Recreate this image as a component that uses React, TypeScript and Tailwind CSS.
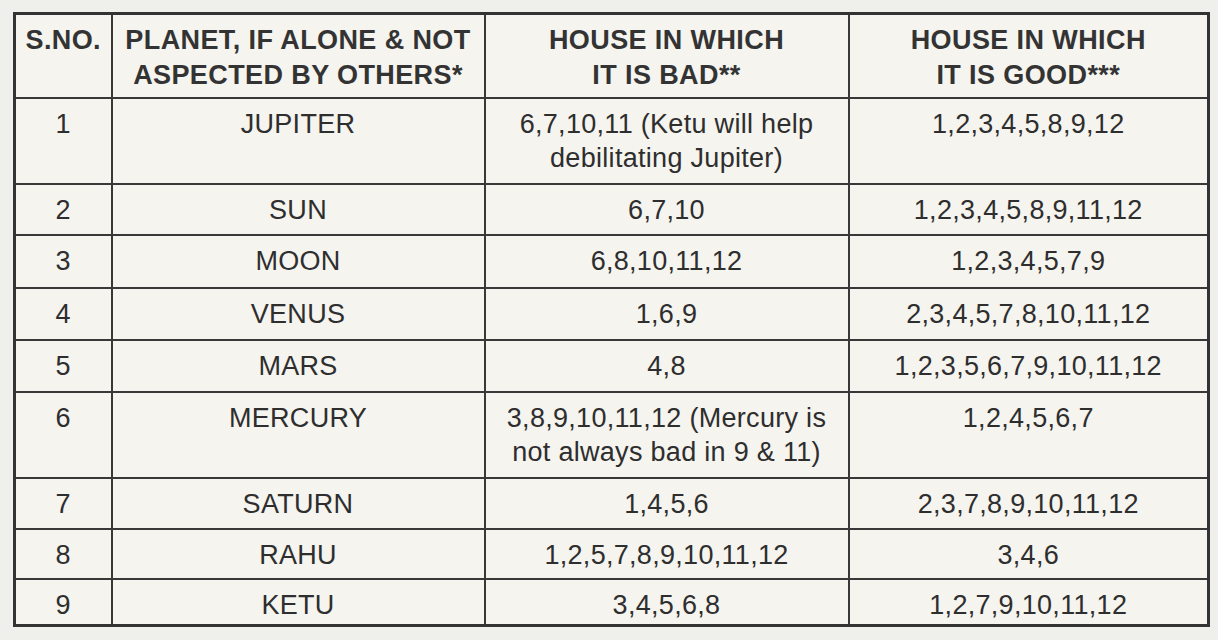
import React from 'react';

type Row = { no: string; planet: string; bad: string[]; good: string; h: string };

const rows: Row[] = [
  { no: '1', planet: 'JUPITER', bad: ['6,7,10,11 (Ketu will help', 'debilitating Jupiter)'], good: '1,2,3,4,5,8,9,12', h: 'h-[86px]' },
  { no: '2', planet: 'SUN', bad: ['6,7,10'], good: '1,2,3,4,5,8,9,11,12', h: 'h-[51px]' },
  { no: '3', planet: 'MOON', bad: ['6,8,10,11,12'], good: '1,2,3,4,5,7,9', h: 'h-[53px]' },
  { no: '4', planet: 'VENUS', bad: ['1,6,9'], good: '2,3,4,5,7,8,10,11,12', h: 'h-[52px]' },
  { no: '5', planet: 'MARS', bad: ['4,8'], good: '1,2,3,5,6,7,9,10,11,12', h: 'h-[52px]' },
  { no: '6', planet: 'MERCURY', bad: ['3,8,9,10,11,12 (Mercury is', 'not always bad in 9 & 11)'], good: '1,2,4,5,6,7', h: 'h-[86px]' },
  { no: '7', planet: 'SATURN', bad: ['1,4,5,6'], good: '2,3,7,8,9,10,11,12', h: 'h-[51px]' },
  { no: '8', planet: 'RAHU', bad: ['1,2,5,7,8,9,10,11,12'], good: '3,4,6', h: 'h-[50px]' },
  { no: '9', planet: 'KETU', bad: ['3,4,5,6,8'], good: '1,2,7,9,10,11,12', h: 'h-[47px]' },
];

const cell = 'border-2 border-[#383838] align-top text-center pt-[8px] px-1 whitespace-nowrap';

export default function App() {
  return (
    <div
      className="w-[1218px] h-[640px] overflow-hidden bg-[#efefeb] pt-[12px] pl-[13px] text-[#2e2e2e]"
      style={{ fontFamily: '"Liberation Sans", Arial, sans-serif' }}
    >
      <table className="border-collapse table-fixed w-[1194px] bg-[#f5f4ef] border-[3px] border-[#333]">
        <colgroup>
          <col className="w-[97px]" />
          <col className="w-[373px]" />
          <col className="w-[364px]" />
          <col className="w-[360px]" />
        </colgroup>
        <thead>
          <tr className="h-[84px] text-[27px] leading-[35px] font-bold tracking-[0.4px] text-[#333]">
            <th className={`${cell} pt-[7px]`}>S.NO.</th>
            <th className={`${cell} pt-[7px]`}>
              PLANET, IF ALONE &amp; NOT
              <br />
              ASPECTED BY OTHERS*
            </th>
            <th className={`${cell} pt-[7px]`}>
              HOUSE IN WHICH
              <br />
              IT IS BAD**
            </th>
            <th className={`${cell} pt-[7px]`}>
              HOUSE IN WHICH
              <br />
              IT IS GOOD***
            </th>
          </tr>
        </thead>
        <tbody className="text-[27px] leading-[34px] tracking-[0.3px]">
          {rows.map((r) => (
            <tr key={r.no} className={r.h}>
              <td className={cell}>{r.no}</td>
              <td className={cell}>{r.planet}</td>
              <td className={cell}>
                {r.bad.map((line, i) => (
                  <div key={i}>{line}</div>
                ))}
              </td>
              <td className={cell}>{r.good}</td>
            </tr>
          ))}
        </tbody>
      </table>
    </div>
  );
}
